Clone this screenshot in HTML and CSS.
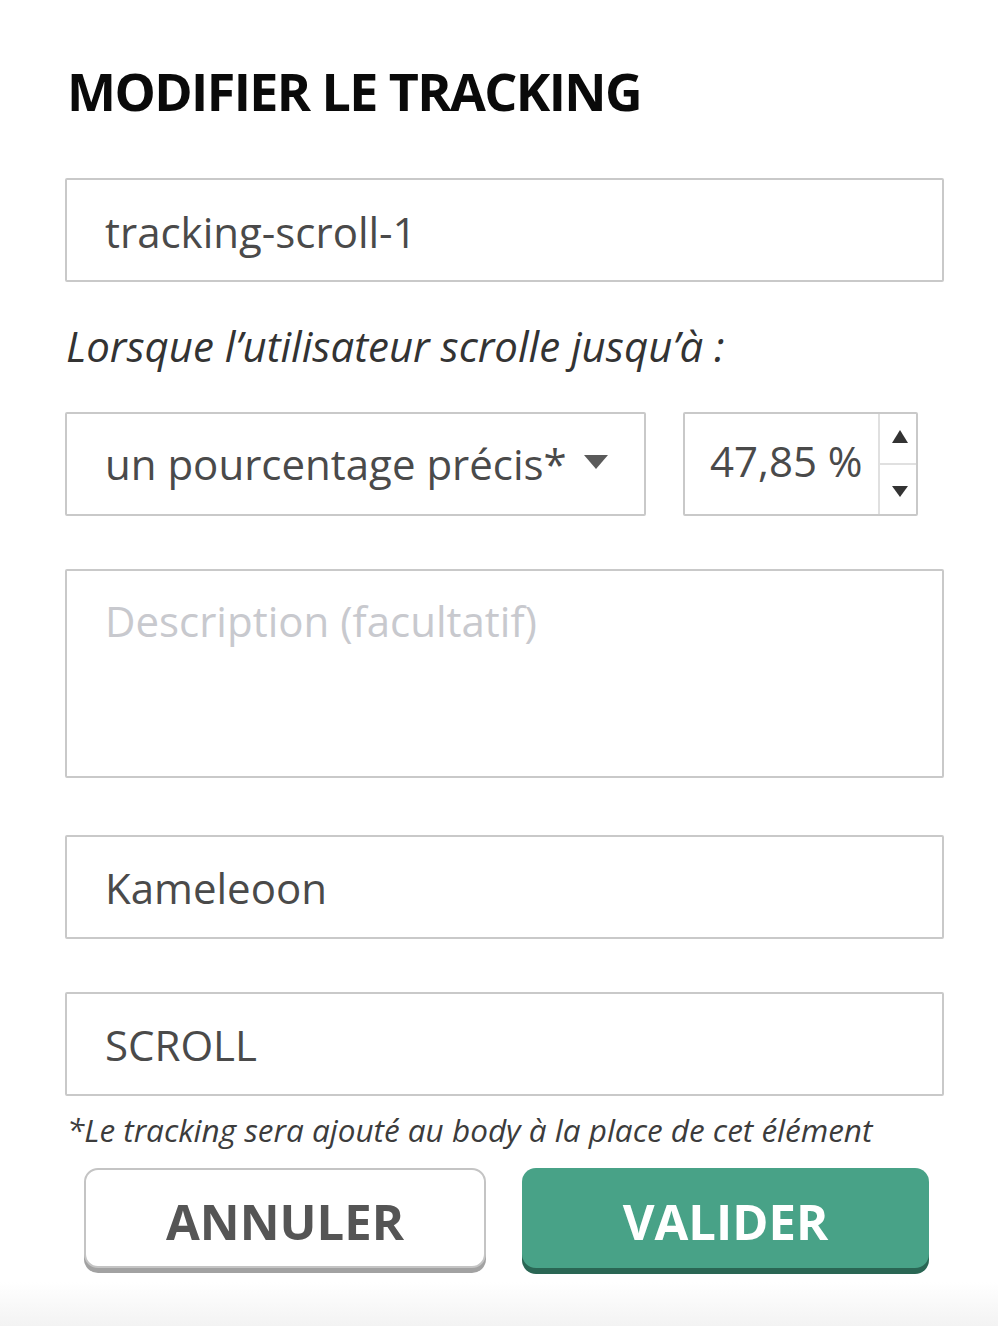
FILE: index.html
```html
<!DOCTYPE html>
<html lang="fr">
<head>
<meta charset="utf-8">
<title>Modifier le tracking</title>
<link rel="stylesheet" href="styles.css">
</head>
<body>
<div class="panel">
  <h1 class="title">MODIFIER LE TRACKING</h1>
  <div class="field field-name"><span class="value">tracking-scroll-1</span></div>
  <p class="label">Lorsque l’utilisateur scrolle jusqu’à :</p>
  <div class="row">
    <div class="field select">
      <span class="value">un pourcentage précis*</span>
      <svg class="caret" width="24" height="14" viewBox="0 0 24 14"><path d="M0 0 H24 L12 14 Z" fill="#5a5a5a"/></svg>
    </div>
    <div class="field number">
      <span class="value">47,85 %</span>
      <div class="spinner">
        <div class="spin spin-up"><svg width="16" height="13" viewBox="0 0 16 13"><path d="M8 0 L16 13 H0 Z" fill="#333"/></svg></div>
        <div class="spin spin-down"><svg width="16" height="11" viewBox="0 0 16 11"><path d="M0 0 H16 L8 11 Z" fill="#333"/></svg></div>
      </div>
    </div>
  </div>
  <div class="field textarea"><span class="placeholder">Description (facultatif)</span></div>
  <div class="field field-provider"><span class="value">Kameleoon</span></div>
  <div class="field field-type"><span class="value">SCROLL</span></div>
  <p class="note">*Le tracking sera ajouté au body à la place de cet élément</p>
  <div class="actions">
    <button class="btn btn-cancel">ANNULER</button>
    <button class="btn btn-ok">VALIDER</button>
  </div>
</div>
</body>
</html>
```
FILE: styles.css
```css
html, body {
  margin: 0;
  padding: 0;
}
html {
  height: 1326px;
  background: #fff;
}
body {
  min-height: 1326px;
  background: linear-gradient(to bottom, #ffffff 0, #ffffff 1282px, #f3f3f3 1326px);
  font-family: "Open Sans", "Liberation Sans", sans-serif;
  font-stretch: 100%;
  color: #4a4a4a;
}
.panel {
  display: flex;
  flex-direction: column;
  padding: 59px 54px 0 65px;
}
.title {
  margin: 0;
  font-size: 52px;
  line-height: 64px;
  font-weight: 700;
  letter-spacing: -1.6px;
  color: #0a0a0a;
  padding-left: 2px;
}
.field {
  box-sizing: border-box;
  border: 2px solid #c9c9c9;
  border-radius: 2px;
  background: #fff;
  display: flex;
  align-items: center;
  font-size: 42px;
  color: #4a4a4a;
}
.value, .placeholder {
  padding-left: 38px;
  line-height: 48px;
}
.field-name {
  margin-top: 55px;
  height: 104px;
  padding-top: 4px;
}
.label {
  margin: 40px 0 0;
  padding-left: 1px;
  font-size: 42px;
  line-height: 48px;
  font-style: italic;
  color: #333;
}
.row {
  margin-top: 42px;
  display: flex;
  gap: 37px;
}
.select {
  width: 581px;
  height: 104px;
  justify-content: space-between;
  padding-right: 36px;
}
.caret {
  margin-top: -4px;
}
.number {
  width: 235px;
  height: 104px;
  justify-content: space-between;
}
.number .value {
  padding-left: 25px;
  margin-top: -6px;
}
.spinner {
  align-self: stretch;
  width: 36px;
  border-left: 2px solid #e0e0e0;
  display: flex;
  flex-direction: column;
}
.spin {
  flex: 1;
  display: flex;
  align-items: center;
  justify-content: center;
  padding-left: 4px;
}
.spin-up {
  border-bottom: 2px solid #e0e0e0;
  padding-bottom: 4px;
}
.spin-down {
  padding-top: 4px;
}
.textarea {
  margin-top: 53px;
  height: 209px;
  align-items: flex-start;
  padding-top: 26px;
}
.placeholder {
  color: #c8c9ce;
}
.field-provider {
  margin-top: 57px;
  height: 104px;
  padding-top: 2px;
}
.field-type {
  margin-top: 53px;
  height: 104px;
  padding-top: 2px;
}
.note {
  margin: 14px 0 0;
  padding-left: 2px;
  font-size: 31.5px;
  line-height: 40px;
  font-style: italic;
  color: #3c3c3c;
}
.actions {
  margin-top: 18px;
  padding-left: 19px;
  display: flex;
  gap: 36px;
}
.btn {
  box-sizing: border-box;
  height: 100px;
  border-radius: 14px;
  font-family: "Open Sans", "Liberation Sans", sans-serif;
  font-stretch: 100%;
  font-size: 49px;
  font-weight: 700;
  padding: 5px 0 0;
  cursor: pointer;
}
.btn-cancel {
  width: 402px;
  background: #fff;
  color: #555;
  border: 2px solid #c4c4c4;
  box-shadow: 0 5px 0 #a2a2a2;
}
.btn-ok {
  width: 407px;
  background: #48a287;
  color: #fff;
  border: none;
  box-shadow: 0 6px 0 #2a6654;
}
```
